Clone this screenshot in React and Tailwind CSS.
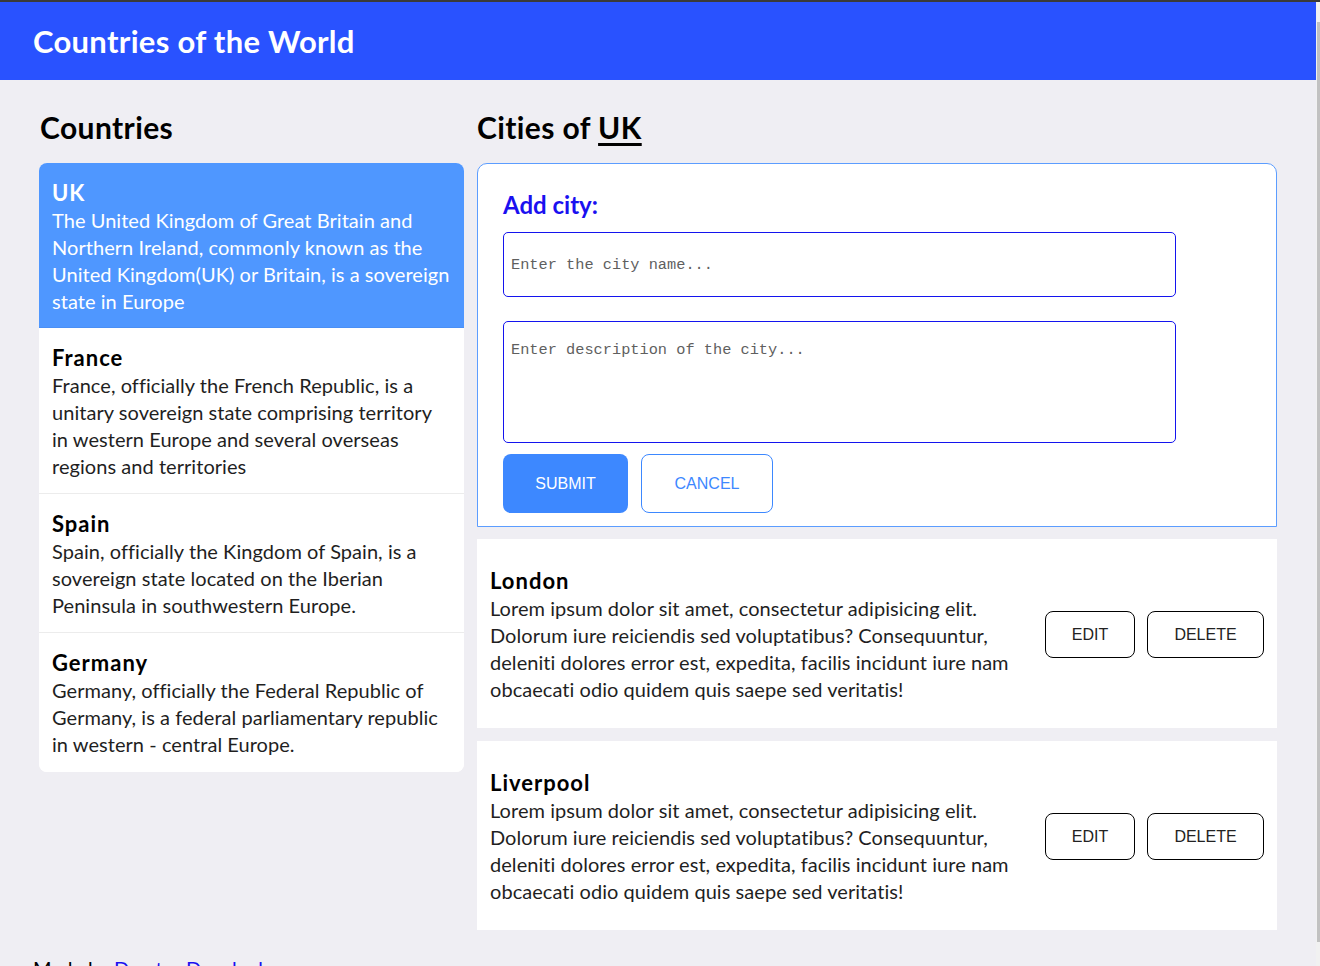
import React from "react";

const countries = [
  {
    name: "UK",
    lines: [
      "The United Kingdom of Great Britain and",
      "Northern Ireland, commonly known as the",
      "United Kingdom(UK) or Britain, is a sovereign",
      "state in Europe",
    ],
    active: true,
  },
  {
    name: "France",
    lines: [
      "France, officially the French Republic, is a",
      "unitary sovereign state comprising territory",
      "in western Europe and several overseas",
      "regions and territories",
    ],
  },
  {
    name: "Spain",
    lines: [
      "Spain, officially the Kingdom of Spain, is a",
      "sovereign state located on the Iberian",
      "Peninsula in southwestern Europe.",
    ],
  },
  {
    name: "Germany",
    lines: [
      "Germany, officially the Federal Republic of",
      "Germany, is a federal parliamentary republic",
      "in western - central Europe.",
    ],
    last: true,
  },
];

const lorem = [
  "Lorem ipsum dolor sit amet, consectetur adipisicing elit.",
  "Dolorum iure reiciendis sed voluptatibus? Consequuntur,",
  "deleniti dolores error est, expedita, facilis incidunt iure nam",
  "obcaecati odio quidem quis saepe sed veritatis!",
];

const font = { fontFamily: "Lato, 'Noto Sans', sans-serif" };

function Lines({ lines }) {
  return (
    <div className="text-[20px] leading-[27px] tracking-[0.05px]">
      {lines.map((l, i) => (
        <div key={i} className="whitespace-nowrap">
          {l}
        </div>
      ))}
    </div>
  );
}

function CityCard({ name }) {
  return (
    <div className="bg-white flex items-center justify-between pl-[13px] pr-[13px] pt-[27px] pb-[25px]">
      <div>
        <div className="text-[22px] leading-[29px] font-bold tracking-[1px] text-black">{name}</div>
        <div className="text-[#1f1f1f]">
          <Lines lines={lorem} />
        </div>
      </div>
      <div className="flex gap-[12px] font-['Liberation_Sans',Arial,sans-serif] text-[16px] text-[#222]">
        <button className="w-[90px] h-[47px] border border-black rounded-[8px] bg-white">EDIT</button>
        <button className="w-[117px] h-[47px] border border-black rounded-[8px] bg-white">DELETE</button>
      </div>
    </div>
  );
}

export default function App() {
  return (
    <div className="w-[1320px] h-[966px] overflow-hidden flex flex-col bg-[#EFEEF3]" style={font}>
      <div className="h-[2px] bg-[#3a3a3a] shrink-0" />
      <div className="flex flex-1 min-h-0">
        <div className="w-[1316px] flex flex-col">
          <header className="h-[78px] shrink-0 bg-[#2952FF] flex items-center pl-[33px]">
            <h1 className="text-white text-[31px] tracking-[0.3px] font-bold leading-none">Countries of the World</h1>
          </header>
          <main className="flex shrink-0 gap-[13px] pl-[39px] pt-[27px]">
            <section className="w-[425px]">
              <h2 className="text-[30px] leading-[40px] font-bold tracking-[0.4px] text-black pl-[1px] mb-[16px]">Countries</h2>
              <div className="rounded-[8px] overflow-hidden bg-white">
                {countries.map((c) => (
                  <div
                    key={c.name}
                    className={
                      (c.active
                        ? "bg-[#4F97FF] text-white border-b border-[#4a8ff5] pb-[12px]"
                        : c.last
                        ? "bg-white text-[#1f1f1f] pb-[14px]"
                        : "bg-white text-[#1f1f1f] border-b border-[#ececec] pb-[13px]") +
                      " pl-[13px] pr-[8px] pt-[15px]"
                    }
                  >
                    <div
                      className={
                        "text-[22px] leading-[29px] font-bold tracking-[1px] " + (c.active ? "text-white" : "text-black")
                      }
                    >
                      {c.name}
                    </div>
                    <Lines lines={c.lines} />
                  </div>
                ))}
              </div>
            </section>
            <section className="w-[800px]">
              <h2 className="text-[30px] leading-[40px] font-bold tracking-[0.4px] text-black mb-[16px]">
                Cities of <span className="underline underline-offset-[4px]">UK</span>
              </h2>
              <div className="bg-white border border-[#5C9DFF] rounded-t-[10px] pl-[25px] pt-[25px] pb-[13px]">
                <div className="text-[24px] leading-[32px] font-bold text-[#1a10f0] mb-[11px]">Add city:</div>
                <input
                  className="block w-[673px] h-[65px] border border-[#1414ee] rounded-[5px] px-[7px] text-[15.3px] outline-none placeholder:text-[#5f5f5f] font-['Liberation_Mono',monospace]"
                  placeholder="Enter the city name..."
                />
                <textarea
                  className="block mt-[24px] w-[673px] h-[122px] border border-[#1414ee] rounded-[5px] px-[7px] pt-[17px] text-[15.3px] outline-none resize-none placeholder:text-[#5f5f5f] font-['Liberation_Mono',monospace]"
                  placeholder="Enter description of the city..."
                />
                <div className="flex gap-[13px] mt-[11px] font-['Liberation_Sans',Arial,sans-serif] text-[16px]">
                  <button className="w-[125px] h-[59px] rounded-[8px] bg-[#3D88FF] text-white">SUBMIT</button>
                  <button className="w-[132px] h-[59px] rounded-[8px] border border-[#3D88FF] bg-white text-[#3D88FF]">CANCEL</button>
                </div>
              </div>
              <div className="flex flex-col gap-[13px] mt-[12px]">
                <CityCard name="London" />
                <CityCard name="Liverpool" />
              </div>
            </section>
          </main>
          <footer className="shrink-0 pl-[33px] mt-[25px] text-[20px] leading-[27px] text-black">
            Made by <a className="text-[#1a10f0]">Dmytro Danylyuk</a>
          </footer>
        </div>
        <div className="w-[4px] bg-[#f1f1f1] flex">
          <div className="w-[3px] ml-[1px] mt-[20px] h-[920px] bg-[#c1c1c1]" />
        </div>
      </div>
    </div>
  );
}
